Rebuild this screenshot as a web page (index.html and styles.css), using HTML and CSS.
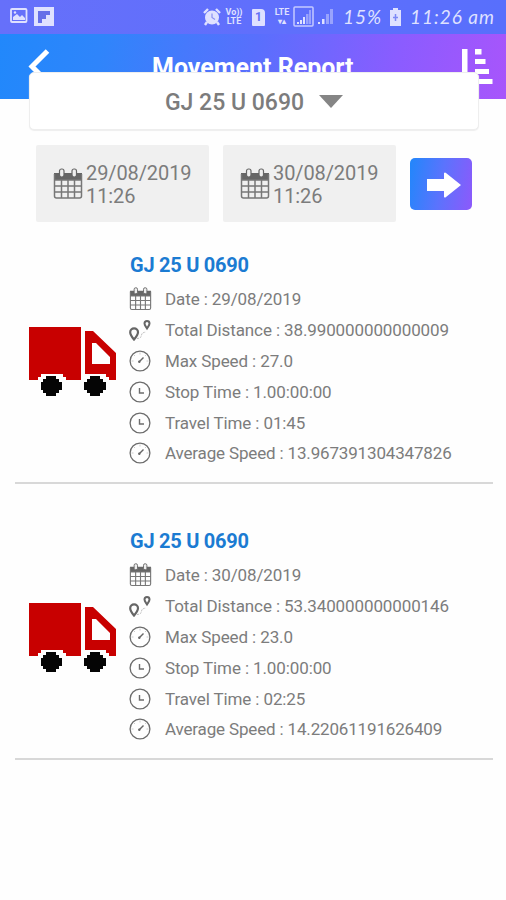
FILE: index.html
```html
<!DOCTYPE html>
<html lang="en">
<head>
<meta charset="utf-8">
<title>Movement Report</title>
<link rel="stylesheet" href="styles.css">
</head>
<body>
<svg class="defs" aria-hidden="true">
  <symbol id="calendar" viewBox="0 0 30 32">
    <path d="M1 5h28v7H1z" fill="#666"/>
    <path d="M1.500 6v22q0 2 2 2h23q2 0 2-2V6M2 12h26M2 18h26M2 24h26M8.500 12v18M15 12v18M21.500 12v18" fill="none" stroke="#777" stroke-width="1.500"/>
    <rect x="6.500" y="1" width="4.500" height="8" rx="2" fill="#eee" stroke="#666" stroke-width="1.200"/>
    <rect x="19" y="1" width="4.500" height="8" rx="2" fill="#eee" stroke="#666" stroke-width="1.200"/>
  </symbol>
  <symbol id="route" viewBox="0 0 22 22">
    <path d="M5 20.500C2.500 17.500 1.200 15.500 1.200 13.200a3.900 3.900 0 0 1 7.800 0c0 2.300-1.500 4.300-4 7.300z" fill="none" stroke="#666" stroke-width="2.200"/>
    <path d="M18 9.500c-1.800-2.700-2.500-3.500-2.500-5a2.500 2.500 0 0 1 5 0c0 1.500-.7 2.300-2.500 5z" fill="none" stroke="#666" stroke-width="2"/>
    <path d="M8 19.500c4-.3 4-1.500 4.500-3.500s1.500-2.500 4.500-3" fill="none" stroke="#bbb" stroke-dasharray="2 1"/>
  </symbol>
  <symbol id="gauge" viewBox="0 0 22 22">
    <circle cx="11" cy="11" r="9.900" fill="none" stroke="#6c6c6c" stroke-width="1.300"/>
    <path d="M11 2.500v2M2.500 11h2M17.500 11h2M5 5l1 1M17 5l-1 1" stroke="#ccc" fill="none"/>
    <path d="M10 12l4.500-4.500" stroke="#666" stroke-width="1.500"/>
    <circle cx="10.300" cy="11.700" r="1.200" fill="#666"/>
  </symbol>
  <symbol id="clock" viewBox="0 0 22 22">
    <circle cx="11" cy="11" r="9.900" fill="none" stroke="#6c6c6c" stroke-width="1.300"/>
    <path d="M10.500 7V12h4.500" fill="none" stroke="#6c6c6c" stroke-width="1.400"/>
  </symbol>
  <symbol id="truck" viewBox="0 0 88 70">
    <path d="M0 0h52v53H37v-3h-3v-3H12v3H9v3H0z" fill="#c80000"/>
    <path d="M56 4h8l23 22v27h-7v-3h-3v-3H56zM63 16v21h18v-7L67 16z" fill="#c80000" fill-rule="evenodd"/>
    <path d="M17 49h10v3h3v3h3v8h-3v3h-3v3H17v-3h-3v-3h-2v-8h2v-3h3zM61 49h10v3h3v3h3v8h-3v3h-3v3H61v-3h-3v-3h-3v-8h3v-3h3z" fill="#050505"/>
  </symbol>
</svg>

<div class="status">
  <svg class="s-left" width="46" height="22" viewBox="0 0 46 22">
    <rect x="1" y="3" width="15.500" height="13" rx="1" fill="none" stroke="#dfe1ff" stroke-width="1.800"/>
    <path d="M3 14v-3l4-3 3 3 2-2 3 3v2z" fill="#dfe1ff"/><circle cx="5" cy="6.500" r="1.200" fill="#dfe1ff"/>
    <rect x="24" y="1" width="20" height="19" fill="#dfe1ff"/>
    <path d="M28 5h12v4h-4v4h-4v4h-4z" fill="#666fe8"/>
  </svg>
  <svg class="alarm" width="18" height="18" viewBox="0 0 18 18">
    <path d="M1 5l4-4M17 5l-4-4M4 14l-2 3M14 14l2 3" stroke="#dfe1ff" stroke-width="2.400"/>
    <circle cx="9" cy="9.500" r="7" fill="#dfe1ff"/><path d="M9 5.500v4l3 2" fill="none" stroke="#8990f3" stroke-width="1.200"/>
  </svg>
  <div class="tiny volte"><span>Vo))</span><span>LTE</span></div>
  <div class="sim">1</div>
  <div class="tiny lte"><span>LTE</span><span class="arrows">▾▴</span></div>
  <svg class="signal" width="41" height="22" viewBox="0 0 41 22">
    <rect x="1" y="1" width="19" height="19" rx="1" fill="none" stroke="#c5caff" stroke-width="1.500"/>
    <path d="M4 16h2v2H4zM7 14h2v4H7zM10 11h2v7h-2zM25 16h2v2h-2zM29 13h2.500v5H29z" fill="#dfe1ff"/>
    <path d="M13 8h2.500v10H13zM16 4h2v14h-2zM33 8h3v10h-3zM37 3h3v15h-3z" fill="#99a3fd"/>
  </svg>
  <span class="percent">15%</span>
  <svg class="battery" width="13" height="18" viewBox="0 0 13 18"><path d="M4 0h5v2h3v16H1V2h3z" fill="#dfe1ff"/><path d="M6.500 6v7M4 9.500h5" stroke="#7d89f5" stroke-width="1.500"/></svg>
  <span class="time">11:26 am</span>
</div>

<header class="header">
  <svg class="back" width="24" height="38" viewBox="0 0 24 38"><path d="M20.500 2L5 17.500 20.500 33" fill="none" stroke="#fff" stroke-width="5"/></svg>
  <h1>Movement Report</h1>
  <svg class="sort" width="32" height="36" viewBox="0 0 32 36"><path d="M1 0h5.500v35H1zM14 0h6.500v5.500H14zM14 10h10.500v5H14zM14 20h14v5H14zM14 30h17.500v5H14z" fill="#fff"/></svg>
</header>

<div class="select"><span>GJ 25 U 0690</span><i class="caret"></i></div>

<div class="filters">
  <div class="date"><svg width="30" height="32"><use href="#calendar"/></svg><div>29/08/2019<br>11:26</div></div>
  <div class="date"><svg width="30" height="32"><use href="#calendar"/></svg><div>30/08/2019<br>11:26</div></div>
  <div class="go"><svg width="34" height="26" viewBox="0 0 34 26"><path d="M0 7h17V1q1-1 2 0l15 12-15 12q-1 1-2 0v-6H0z" fill="#fff"/></svg></div>
</div>

<main>
  <section class="report">
    <svg class="truck" width="88" height="70"><use href="#truck"/></svg>
    <div class="details">
      <h2>GJ 25 U 0690</h2>
      <ul>
        <li><svg><use href="#calendar"/></svg><span>Date : 29/08/2019</span></li>
        <li><svg><use href="#route"/></svg><span>Total Distance : 38.990000000000009</span></li>
        <li><svg><use href="#gauge"/></svg><span>Max Speed : 27.0</span></li>
        <li><svg><use href="#clock"/></svg><span>Stop Time : 1.00:00:00</span></li>
        <li><svg><use href="#clock"/></svg><span>Travel Time : 01:45</span></li>
        <li><svg><use href="#gauge"/></svg><span>Average Speed : 13.967391304347826</span></li>
      </ul>
    </div>
  </section>
  <section class="report">
    <svg class="truck" width="88" height="70"><use href="#truck"/></svg>
    <div class="details">
      <h2>GJ 25 U 0690</h2>
      <ul>
        <li><svg><use href="#calendar"/></svg><span>Date : 30/08/2019</span></li>
        <li><svg><use href="#route"/></svg><span>Total Distance : 53.340000000000146</span></li>
        <li><svg><use href="#gauge"/></svg><span>Max Speed : 23.0</span></li>
        <li><svg><use href="#clock"/></svg><span>Stop Time : 1.00:00:00</span></li>
        <li><svg><use href="#clock"/></svg><span>Travel Time : 02:25</span></li>
        <li><svg><use href="#gauge"/></svg><span>Average Speed : 14.22061191626409</span></li>
      </ul>
    </div>
  </section>
</main>
</body>
</html>
```
FILE: styles.css
```css
* { box-sizing: border-box; }
body { margin: 0; height: 900px; overflow: hidden; background: #fefefe; font-family: Roboto, sans-serif; color: #7c7c7c; }
.defs { display: none; }
svg { display: block; flex: none; }
.status { display: flex; align-items: center; height: 34px; padding-left: 10px; color: #dfe1ff; background: linear-gradient(90deg, #6670fa, #606ffc 50%, #586ffc); }
.alarm { margin-left: 147px; }
.tiny { display: flex; flex-direction: column; flex: none; font-size: 9px; line-height: 9px; font-weight: 700; text-align: center; }
.volte { width: 18px; margin-left: 4px; }
.sim { flex: none; width: 13px; height: 17px; margin-left: 9px; border-radius: 1px 4px 1px 1px; background: #dfe1ff; color: #6470f5; font: 700 12px/17px Roboto, sans-serif; text-align: center; }
.lte { width: 20px; margin-left: 7px; }
.arrows { font-size: 8px; }
.signal { margin-left: 1px; }
.percent, .time { flex: none; font: italic 19px/34px Lato, sans-serif; white-space: nowrap; }
.percent { width: 40px; margin-left: 9px; letter-spacing: 1px; }
.battery { margin-left: 6px; }
.time { margin-left: 8px; letter-spacing: 1px; }
.header { display: flex; height: 65px; padding: 15px 13px 0 27px; background: linear-gradient(100deg, #2188fb 0%, #2f85fb 20%, #596ffd 50%, #8b5cff 78%, #a855fb 100%); }
h1 { margin: 4px auto 0 101px; color: #fff; font-size: 25px; line-height: 30px; font-weight: 700; white-space: nowrap; }
.select { position: relative; display: flex; align-items: center; justify-content: center; gap: 15px; width: 450px; height: 58px; margin: -27px 0 0 29px; border: 1px solid #eee; border-radius: 5px; background: #fff; box-shadow: 0 1px 1px #eee; font-size: 23px; font-weight: 500; padding-top: 2px; }
.caret { border: 12px solid transparent; border-top: 13px solid #858585; border-bottom: 0; margin-top: -2px; }
.filters { display: flex; align-items: center; margin: 15px 0 0 36px; height: 77px; }
.date { display: flex; align-items: center; gap: 3px; width: 173px; height: 77px; margin-right: 14px; padding-left: 17px; border-radius: 2px; background: #f0f0f0; font-size: 20px; line-height: 23px; letter-spacing: -0.1px; padding-top: 2px; }
.date svg { margin-top: -2px; }
.go { display: grid; place-items: center; width: 62px; height: 52px; padding-left: 5px; padding-top: 2px; border-radius: 5px; background: linear-gradient(100deg, #2187fb, #5b73fd 50%, #8d59fb); }
main { margin: 0 13px 0 15px; }
.report { display: flex; height: 276px; padding-left: 14px; border-bottom: 2px solid #d8d8d8; }
.report:first-child { height: 262px; }
.report:first-child .truck { margin-top: 105px; }
.report:first-child .details { padding-top: 29px; }
.truck { margin-top: 119px; }
.details { padding: 43px 0 0 12px; }
h2 { margin: 0 0 5px; color: #1b7bd2; font-size: 20px; line-height: 28px; font-weight: 700; letter-spacing: -0.25px; padding-left: 1px; }
ul { list-style: none; margin: 0; padding: 0; }
li { display: flex; align-items: center; gap: 14px; height: 30.8px; font-size: 17px; letter-spacing: -0.11px; white-space: nowrap; }
li svg { width: 22px; height: 22px; }
li svg:has([href="#calendar"]) { height: 24px; width: 23px; margin-right: -1px; }
li:last-child span { letter-spacing: -0.16px; }
```
